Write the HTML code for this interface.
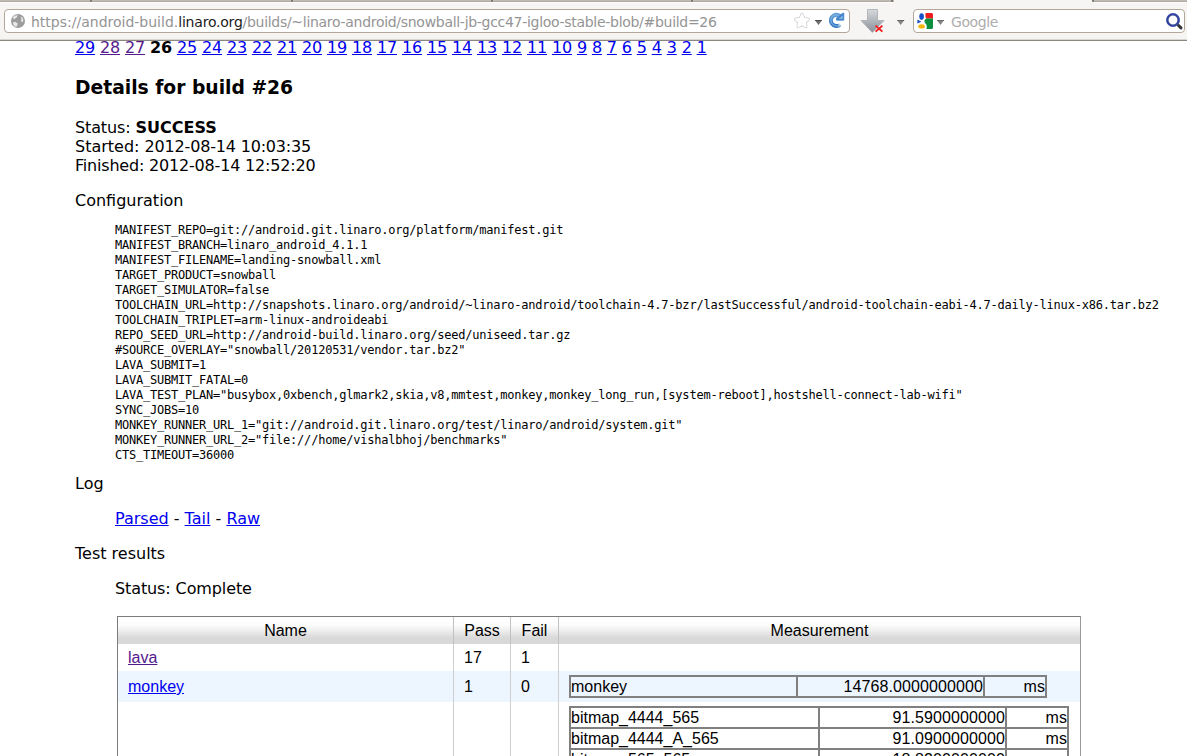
<!DOCTYPE html>
<html lang="en">
<head>
<meta charset="utf-8">
<title>Build details</title>
<style>
html,body{margin:0;padding:0;background:#fff;}
body{width:1187px;height:756px;overflow:hidden;position:relative;font-family:"DejaVu Sans","Liberation Sans",sans-serif;font-size:16px;line-height:19px;color:#000;}
a{color:#0000ee;text-decoration:underline;}
a.v{color:#551a8b;}
#chrome{position:absolute;left:0;top:0;width:1187px;height:41px;background:#f6f5f3;box-sizing:border-box;border-bottom:1px solid #8c8680;box-shadow:inset 0 -1px 0 #d9d5d0;z-index:5;}
.tl{position:absolute;top:0;height:2px;background:linear-gradient(#c7c2bc,#aaa59e);box-shadow:0 1px 0 #fdfdfc;}
.td{position:absolute;top:0;width:2px;height:2px;background:#7d7770;border-radius:0 0 1px 1px;}
.box{position:absolute;top:9px;height:24px;box-sizing:border-box;border:1px solid #b3a799;border-radius:4px;background:#fff;}
#url{left:4px;width:846px;}
#search{left:913px;width:272px;}
.utext{position:absolute;left:26px;top:4px;font-family:"DejaVu Sans","Liberation Sans",sans-serif;font-size:14px;line-height:17px;color:#949494;white-space:nowrap;}
.utext b{font-weight:normal;color:#1a1a1a;letter-spacing:-0.21px;}
#page{position:absolute;left:0;top:41px;width:1187px;height:715px;overflow:hidden;}
#content{position:absolute;left:75px;top:-2px;width:1100px;}
#builds{white-space:nowrap;letter-spacing:-0.15px;position:relative;top:-1px;}
.dg{letter-spacing:-0.18px;}
h3{font-size:18.72px;line-height:22px;margin:0;font-weight:bold;}
p{margin:0;}
pre{font-family:"DejaVu Sans Mono","Liberation Mono",monospace;font-size:12px;line-height:15px;margin:0;letter-spacing:-0.22px;}
.ind{margin-left:40px;}

table.res{position:absolute;left:117px;top:575px;border-collapse:separate;border-spacing:0;font-family:"Liberation Sans",sans-serif;font-size:16px;line-height:19px;border:1px solid #7c7c7c;border-right-color:#9a9a9a;width:964px;table-layout:fixed;}
table.res th{font-weight:normal;height:27px;padding:0 10px;box-sizing:border-box;background:linear-gradient(#ffffff 0%,#fdfdfd 28%,#efefef 50%,#dedede 70%,#d8d8d8 80%,#d8d8d8 100%);text-align:center;border-left:1px solid #c0c0c0;vertical-align:middle;}
table.res td{padding:4px 10px;box-sizing:border-box;border-left:1px solid #cfcfcf;vertical-align:middle;}
table.res th:first-child,table.res>tbody>tr>td:first-child{border-left:none;}
table.res tr.alt td{background:#edf5ff;}
table.in{border-collapse:separate;border-spacing:0;border:1px solid #808080;table-layout:fixed;font-size:16px;line-height:19px;}
table.in td{border:1px solid #808080;padding:0;height:21px;box-sizing:border-box;background:none !important;white-space:nowrap;overflow:hidden;}
table.in td.n{text-align:right;letter-spacing:0.1px;}

</style>
</head>
<body>
<div id="page">
<div id="content">
<div id="builds"><a href="#build=29">29</a> <a class="v" href="#build=28">28</a> <a class="v" href="#build=27">27</a> <b>26</b> <a href="#build=25">25</a> <a href="#build=24">24</a> <a href="#build=23">23</a> <a href="#build=22">22</a> <a href="#build=21">21</a> <a href="#build=20">20</a> <a href="#build=19">19</a> <a href="#build=18">18</a> <a href="#build=17">17</a> <a href="#build=16">16</a> <a href="#build=15">15</a> <a href="#build=14">14</a> <a href="#build=13">13</a> <a href="#build=12">12</a> <a href="#build=11">11</a> <a href="#build=10">10</a> <a href="#build=9">9</a> <a href="#build=8">8</a> <a href="#build=7">7</a> <a href="#build=6">6</a> <a href="#build=5">5</a> <a href="#build=4">4</a> <a href="#build=3">3</a> <a href="#build=2">2</a> <a href="#build=1">1</a></div>
<h3 style="margin-top:19px">Details for build #26</h3>
<p style="margin-top:19px"><span style="letter-spacing:-0.12px">Status: </span><b>SUCCESS</b><br>Started: <span class="dg">2012-08-14 10:03:35</span><br><span style="letter-spacing:-0.2px">Finished: </span><span class="dg">2012-08-14 12:52:20</span></p>
<p style="margin-top:16px">Configuration</p>
<pre class="ind" style="margin-top:13px">MANIFEST_REPO=git://android.git.linaro.org/platform/manifest.git
MANIFEST_BRANCH=linaro_android_4.1.1
MANIFEST_FILENAME=landing-snowball.xml
TARGET_PRODUCT=snowball
TARGET_SIMULATOR=false
TOOLCHAIN_URL=http://snapshots.linaro.org/android/~linaro-android/toolchain-4.7-bzr/lastSuccessful/android-toolchain-eabi-4.7-daily-linux-x86.tar.bz2
TOOLCHAIN_TRIPLET=arm-linux-androideabi
REPO_SEED_URL=http://android-build.linaro.org/seed/uniseed.tar.gz
#SOURCE_OVERLAY="snowball/20120531/vendor.tar.bz2"
LAVA_SUBMIT=1
LAVA_SUBMIT_FATAL=0
LAVA_TEST_PLAN="busybox,0xbench,glmark2,skia,v8,mmtest,monkey,monkey_long_run,[system-reboot],hostshell-connect-lab-wifi"
SYNC_JOBS=10
MONKEY_RUNNER_URL_1="git://android.git.linaro.org/test/linaro/android/system.git"
MONKEY_RUNNER_URL_2="file:///home/vishalbhoj/benchmarks"
CTS_TIMEOUT=36000</pre>
<p style="margin-top:11px">Log</p>
<p class="ind" style="margin-top:16px"><a href="#parsed">Parsed</a> - <a href="#tail">Tail</a> - <a href="#raw">Raw</a></p>
<p style="margin-top:16px">Test results</p>
<p class="ind" style="margin-top:16px;letter-spacing:-0.11px">Status: Complete</p>
</div>

<table class="res" cellspacing="0">
<colgroup><col style="width:335px"><col style="width:57px"><col style="width:48px"><col style="width:522px"></colgroup>
<tr><th>Name</th><th>Pass</th><th>Fail</th><th>Measurement</th></tr>
<tr style="height:27px"><td><a class="v" href="#lava">lava</a></td><td>17</td><td>1</td><td></td></tr>
<tr class="alt" style="height:31px"><td><a href="#monkey">monkey</a></td><td>1</td><td>0</td><td>
<table class="in" style="width:478px"><colgroup><col style="width:227px"><col style="width:187px"><col style="width:62px"></colgroup>
<tr><td>monkey</td><td class="n">14768.0000000000</td><td class="n">ms</td></tr></table>
</td></tr>
<tr><td style="height:60px"></td><td></td><td></td><td style="vertical-align:top">
<table class="in" style="width:500px"><colgroup><col style="width:249px"><col style="width:187px"><col style="width:62px"></colgroup>
<tr><td>bitmap_4444_565</td><td class="n">91.5900000000</td><td class="n">ms</td></tr>
<tr><td>bitmap_4444_A_565</td><td class="n">91.0900000000</td><td class="n">ms</td></tr>
<tr><td>bitmap_565_565</td><td class="n">18.8200000000</td><td class="n">ms</td></tr>
<tr><td>bitmap_565_A_565</td><td class="n">18.8100000000</td><td class="n">ms</td></tr>
</table>
</td></tr>
</table>
</div>
<div id="chrome">
<div class="tl" style="left:0;width:894px"></div><div class="tl" style="left:1093px;width:94px"></div>
<div class="td" style="left:90px"></div><div class="td" style="left:291px"></div><div class="td" style="left:491px"></div><div class="td" style="left:691px"></div><div class="td" style="left:891px"></div><div class="td" style="left:1092px"></div>
<div class="box" id="url"><span class="utext"><span>https://android-build.</span><b>linaro.org</b><span style="letter-spacing:-0.294px">/builds/~linaro-android/snowball-jb-gcc47-igloo-stable-blob/#build=26</span></span></div>
<div class="box" id="search"><span class="utext" style="left:37px;color:#adadad;letter-spacing:-0.4px">Google</span></div>
<svg id="icons" width="1187" height="41" viewBox="0 0 1187 41" style="position:absolute;left:0;top:0">
<defs>
<linearGradient id="rg" x1="0" y1="0" x2="0" y2="1"><stop offset="0" stop-color="#5d9bd8"/><stop offset="1" stop-color="#2f72bd"/></linearGradient>
<linearGradient id="dg" x1="0" y1="0" x2="0" y2="1"><stop offset="0" stop-color="#d6d9dc"/><stop offset="0.45" stop-color="#b4b9be"/><stop offset="1" stop-color="#8a9096"/></linearGradient>
<linearGradient id="fade" gradientUnits="userSpaceOnUse" x1="838" y1="28" x2="842.5" y2="23"><stop offset="0" stop-color="#fff" stop-opacity="0"/><stop offset="1" stop-color="#fff" stop-opacity="1"/></linearGradient>
</defs>
<!-- globe -->
<circle cx="18" cy="21" r="7" fill="#9c9c9c"/>
<path d="M12.6 17.2 L15.8 15.2 L18 15.6 L16.4 17.8 L14 19.2 Z M12.8 22.6 L15.2 21.8 L17.8 23.4 L17 26.2 L15 26.8 L13.4 24.8 Z M20.6 16.6 L22.8 17.8 L23.4 20.6 L22.2 22.6 L21 21 L21.4 18.8 Z" fill="#e6e6e6"/>
<!-- star -->
<path d="M802.00 14.60 L803.88 18.61 L808.28 19.16 L805.04 22.19 L805.88 26.54 L802.00 24.40 L798.12 26.54 L798.96 22.19 L795.72 19.16 L800.12 18.61 Z" fill="#d6d6d6" stroke="#d6d6d6" stroke-width="3.4" stroke-linejoin="round"/>
<path d="M802.00 14.60 L803.88 18.61 L808.28 19.16 L805.04 22.19 L805.88 26.54 L802.00 24.40 L798.12 26.54 L798.96 22.19 L795.72 19.16 L800.12 18.61 Z" fill="#fff" stroke="#fff" stroke-width="1.5" stroke-linejoin="round"/>
<!-- dropdown -->
<path d="M814.8 20 H822.2 L818.5 25 Z" fill="#6e6e6e"/><path d="M814.8 20 H822.2 L821.6 20.9 H815.4 Z" fill="#4e4e4e"/>
<!-- reload -->
<path d="M841.74 18.28 A5.65 5.65 0 1 0 840.28 24.60" fill="none" stroke="url(#rg)" stroke-width="3.9"/>
<path d="M841.74 18.28 A5.65 5.65 0 1 0 840.28 24.60" fill="none" stroke="#8dbbe6" stroke-width="1.3" opacity="0.7"/>
<path d="M838 23 L845 23 L845 29 L838 29 Z" fill="url(#fade)"/>
<path d="M843.8 13.0 L843.8 20.2 L836.5 20.2 L836.5 17.8 L838.5 17.0 L841.6 13.8 Z" fill="#4385cc" stroke="#3a7cc6" stroke-width="0.7" stroke-linejoin="round"/>
<path d="M842.7 15.6 L842.7 19.1 L838.6 19.1 Z" fill="#86b3e1"/>
<!-- download arrow -->
<path d="M867.5 9.5 H877.5 V20.5 H884 L872.3 32.5 L861 20.5 H867.5 Z" fill="url(#dg)" stroke="#a7acb1" stroke-width="0.8"/>
<path d="M875.6 25.6 L882.4 31.6 M882.4 25.6 L875.6 31.6" stroke="#f21a1a" stroke-width="1.9"/>
<path d="M897 20 H904.4 L900.7 25 Z" fill="#858585"/><path d="M897 20 H904.4 L903.8 20.9 H897.6 Z" fill="#666"/>
<!-- google icon -->
<rect x="917" y="13" width="16" height="16" rx="1.5" fill="#fff"/>
<path d="M925.6 13 H931.5 A1.5 1.5 0 0 1 933 14.5 V18.4 H926.4 Q925 17.8 925.6 13 Z" fill="#ee1c1c"/>
<path d="M926 18.4 H933 V27.5 A1.5 1.5 0 0 1 931.5 29 H926.4 Q927.6 25.6 925.4 23.6 Q923.2 20.6 926 18.4 Z" fill="#0b8e3d"/>
<ellipse cx="921.6" cy="16.6" rx="2.3" ry="3.3" fill="#1450c8"/>
<path d="M917.4 19.4 L921.4 21.8 L917.4 23.6 Z" fill="#1a4fc0"/>
<ellipse cx="921.6" cy="26.4" rx="3.3" ry="2.1" fill="#f5b40a"/>
<path d="M936.8 20 H944.2 L940.5 25 Z" fill="#858585"/><path d="M936.8 20 H944.2 L943.6 20.9 H937.4 Z" fill="#666"/>
<!-- magnifier -->
<path d="M1178 25 L1181 27.9" stroke="#333" stroke-width="3" stroke-linecap="round"/>
<circle cx="1173" cy="20" r="6.6" fill="none" stroke="#8496d8" stroke-width="1"/>
<circle cx="1173" cy="20" r="5.6" fill="#fdfdfd" stroke="#33449b" stroke-width="2.3"/>
</svg>
</div>
</body>
</html>
